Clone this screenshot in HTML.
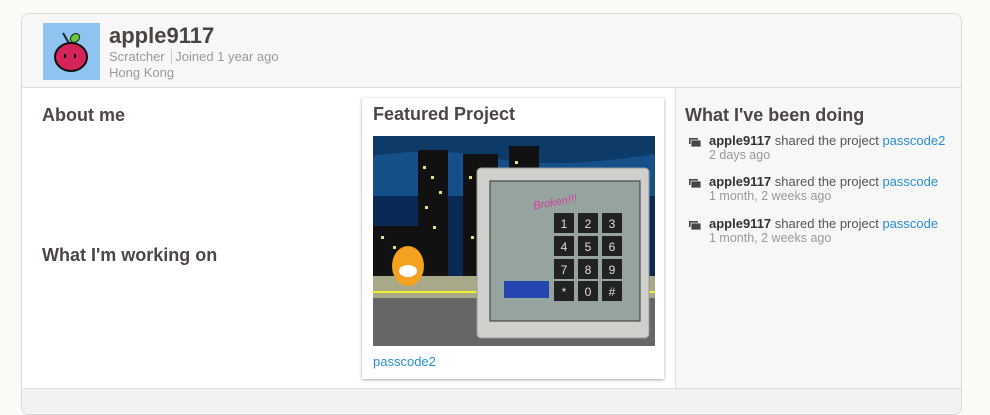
<!DOCTYPE html>
<html><head><style>
body{margin:0;width:990px;height:406px;background:#fbfaf5;font-family:"Liberation Sans",Arial,sans-serif;overflow:hidden;position:relative}
.card{position:absolute;left:21px;top:13px;width:939px;height:400px;border:1px solid #d9d9d9;border-radius:8px;background:#fff;overflow:hidden}
.hdr{position:absolute;left:0;top:0;width:939px;height:73px;background:#f7f7f7;border-bottom:1px solid #ddd}
.av{position:absolute;left:21px;top:9px;width:57px;height:57px;background:#8ec4ef}
.name{position:absolute;left:87px;top:9px;font-size:22px;font-weight:bold;color:#4a4440}
.sub{position:absolute;left:87px;top:35px;font-size:13px;color:#999;line-height:16px}
h2{margin:0;font-size:18px;font-weight:bold;color:#4d4644;position:absolute}
.right{position:absolute;left:653px;top:74px;width:286px;height:300px;background:#f7f7f7;border-left:1px solid #ddd}
.feat{position:absolute;left:340px;top:84px;width:302px;height:281px;background:#fff;box-shadow:0 1px 3px rgba(0,0,0,.35)}
.bottom{position:absolute;left:0;top:374px;width:939px;height:30px;background:#f2f2f2;border-top:1px solid #ddd}
.act{position:absolute;left:13px;font-size:13px;line-height:14px;color:#555}
.act b{color:#333}
.act a{color:#2a8fcc;text-decoration:none}
.act .t{color:#999;display:block;font-size:12.5px}
.ic{position:absolute;left:0;top:4px;width:12px;height:9px}
</style></head><body>
<div class="card">
<div class="hdr">
<div class="av"><svg width="57" height="57" viewBox="0 0 57 57"><line x1="20" y1="10" x2="27" y2="22" stroke="#222" stroke-width="2"/><ellipse cx="32" cy="15" rx="5" ry="4" fill="#6c3" stroke="#222" transform="rotate(-40 32 15)"/><ellipse cx="28" cy="34" rx="16" ry="14" fill="#d4245a" stroke="#111" stroke-width="2"/><rect x="21" y="31" width="2" height="4" fill="#111"/><rect x="31" y="31" width="2" height="4" fill="#111"/></svg></div>
<div class="name">apple9117</div>
<div class="sub">Scratcher <span style="border-left:1px solid #ccc;margin:0 3px"></span> Joined 1 year ago<br>Hong Kong</div>
</div>
<h2 style="left:20px;top:91px">About me</h2>
<h2 style="left:20px;top:231px">What I'm working on</h2>
<div class="right">
<h2 style="left:9px;top:17px">What I've been doing</h2>
<div class="act" style="top:46px"><svg class="ic" viewBox="0 0 12 9"><rect x="0" y="0" width="9" height="6" fill="#444"/><rect x="2" y="2" width="10" height="7" fill="#444" stroke="#f7f7f7" stroke-width=".8"/></svg><div style="margin-left:20px"><b>apple9117</b> shared the project <a>passcode2</a><span class="t">2 days ago</span></div></div>
<div class="act" style="top:87px"><svg class="ic" viewBox="0 0 12 9"><rect x="0" y="0" width="9" height="6" fill="#444"/><rect x="2" y="2" width="10" height="7" fill="#444" stroke="#f7f7f7" stroke-width=".8"/></svg><div style="margin-left:20px"><b>apple9117</b> shared the project <a>passcode</a><span class="t">1 month, 2 weeks ago</span></div></div>
<div class="act" style="top:129px"><svg class="ic" viewBox="0 0 12 9"><rect x="0" y="0" width="9" height="6" fill="#444"/><rect x="2" y="2" width="10" height="7" fill="#444" stroke="#f7f7f7" stroke-width=".8"/></svg><div style="margin-left:20px"><b>apple9117</b> shared the project <a>passcode</a><span class="t">1 month, 2 weeks ago</span></div></div>
</div>
<div class="feat">
<h2 style="left:11px;top:6px">Featured Project</h2>
<svg style="position:absolute;left:11px;top:38px" width="282" height="210" viewBox="0 0 282 210">
<rect width="282" height="210" fill="#15508a"/>
<path d="M0 20 Q60 10 120 22 T282 18 V0 H0Z" fill="#0d3a66"/>
<rect x="0" y="60" width="282" height="80" fill="#0a2a55"/>
<rect x="45" y="14" width="30" height="130" fill="#111"/>
<rect x="90" y="18" width="35" height="130" fill="#111"/>
<rect x="136" y="10" width="30" height="130" fill="#111"/>
<rect x="0" y="90" width="45" height="50" fill="#111"/>
<g fill="#e8e070"><rect x="50" y="30" width="3" height="3"/><rect x="58" y="40" width="3" height="3"/><rect x="66" y="55" width="3" height="3"/><rect x="52" y="70" width="3" height="3"/><rect x="60" y="90" width="3" height="3"/><rect x="96" y="40" width="3" height="3"/><rect x="104" y="60" width="3" height="3"/><rect x="112" y="80" width="3" height="3"/><rect x="98" y="100" width="3" height="3"/><rect x="142" y="25" width="3" height="3"/><rect x="150" y="40" width="3" height="3"/><rect x="8" y="100" width="3" height="3"/><rect x="20" y="110" width="3" height="3"/></g>
<rect x="0" y="140" width="282" height="22" fill="#a9a98a"/>
<rect x="0" y="162" width="282" height="48" fill="#666"/>
<rect x="0" y="155" width="282" height="2" fill="#ee3"/>
<ellipse cx="35" cy="130" rx="16" ry="20" fill="#f4a020"/>
<ellipse cx="35" cy="135" rx="9" ry="6" fill="#fff"/>
<rect x="104" y="32" width="172" height="170" rx="4" fill="#cfd0cc" stroke="#999"/>
<rect x="117" y="45" width="150" height="140" fill="#96a4a0" stroke="#333"/>
<g fill="#222"><rect x="181" y="77" width="20" height="20"/><rect x="205" y="77" width="20" height="20"/><rect x="229" y="77" width="20" height="20"/><rect x="181" y="100" width="20" height="20"/><rect x="205" y="100" width="20" height="20"/><rect x="229" y="100" width="20" height="20"/><rect x="181" y="123" width="20" height="20"/><rect x="205" y="123" width="20" height="20"/><rect x="229" y="123" width="20" height="20"/><rect x="181" y="145" width="20" height="20"/><rect x="205" y="145" width="20" height="20"/><rect x="229" y="145" width="20" height="20"/></g>
<g fill="#ddd" font-size="12" font-family="Liberation Sans" text-anchor="middle"><text x="191" y="92">1</text><text x="215" y="92">2</text><text x="239" y="92">3</text><text x="191" y="115">4</text><text x="215" y="115">5</text><text x="239" y="115">6</text><text x="191" y="138">7</text><text x="215" y="138">8</text><text x="239" y="138">9</text><text x="191" y="160">*</text><text x="215" y="160">0</text><text x="239" y="160">#</text></g>
<rect x="131" y="145" width="45" height="17" fill="#2545b0"/>
<text x="160" y="70" font-size="11" fill="#d040a0" font-style="italic" transform="rotate(-10 180 66)" font-family="Liberation Sans">Broken!!!</text>
</svg>
<div style="position:absolute;left:11px;top:256px;font-size:13px;color:#2a8fcc">passcode2</div>
</div>
<div class="bottom"></div>
</div>
</body></html>
